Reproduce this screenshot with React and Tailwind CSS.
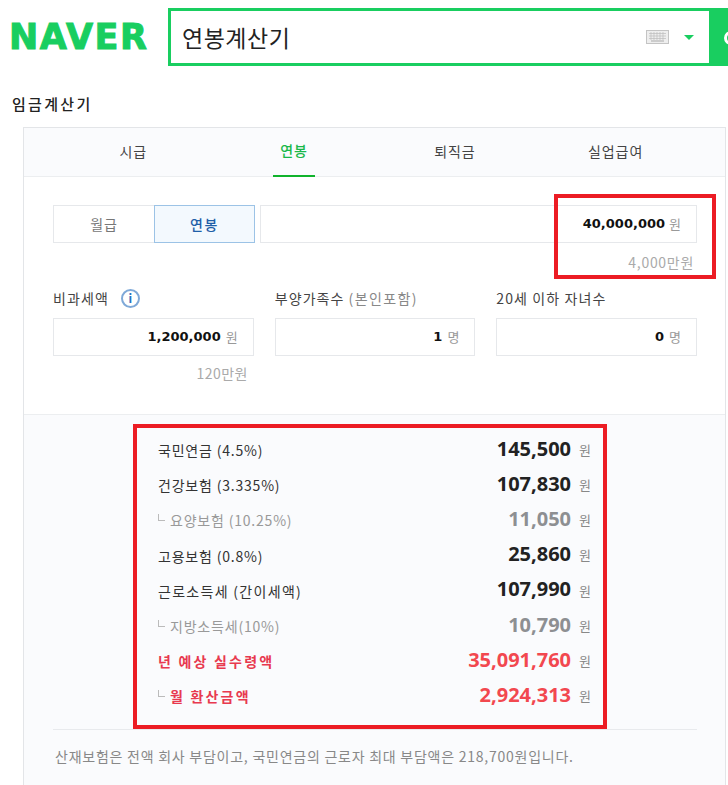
import React from "react";

const KR = "font-['Noto_Sans_CJK_KR','Noto_Sans',sans-serif]";

const tabs = ["시급", "연봉", "퇴직금", "실업급여"];

const rows = [
  { label: "국민연금 (4.5%)", value: "145,500" },
  { label: "건강보험 (3.335%)", value: "107,830" },
  { label: "요양보험 (10.25%)", value: "11,050", sub: true },
  { label: "고용보험 (0.8%)", value: "25,860" },
  { label: "근로소득세 (간이세액)", value: "107,990", wide: true },
  { label: "지방소득세(10%)", value: "10,790", sub: true },
  { label: "년 예상 실수령액", value: "35,091,760", red: true },
  { label: "월 환산금액", value: "2,924,313", red: true, sub: true },
];

function Corner() {
  return <span className="mr-[5px] mb-[7px] inline-block h-[7px] w-[7px] border-b border-l border-[#bbb]" />;
}

function KeyboardIcon() {
  return (
    <svg className="mr-[15px]" width="23" height="14" viewBox="0 0 23 14">
      <rect x="0.5" y="0.5" width="22" height="13" fill="#eee" stroke="#c4c4c4" />
      <path d="M3 3.5h17M3 6h17M3 8.5h17M5 2v8M8 2v8M11 2v8M14 2v8M17 2v8" stroke="#bbb" strokeWidth="0.7" fill="none" />
      <path d="M5 11h13" stroke="#aaa" />
    </svg>
  );
}

function NumberField({ label, hint, value, unit, info }) {
  return (
    <div className="min-w-0 flex-1">
      <div className="flex h-[20px] items-center text-[14px] tracking-[1.1px] whitespace-nowrap text-[#444]">
        {label}
        {hint && <span className="ml-1 tracking-[1.4px] text-[#888]">{hint}</span>}
        {info && (
          <span className="ml-[12px] flex h-[19px] w-[19px] items-center justify-center rounded-full border-2 border-[#7fa9d8] text-[12px] font-bold tracking-normal text-[#2a6fc0]">
            i
          </span>
        )}
      </div>
      <div className="mt-[10px] flex h-[38px] items-center justify-end border border-[#e6e8eb] bg-white pr-[15px]">
        <b className="font-['DejaVu_Sans'] text-[13px] text-[#111]">{value}</b>
        <span className="ml-[5px] text-[13px] text-[#999]">{unit}</span>
      </div>
    </div>
  );
}

export default function App() {
  return (
    <div className={`relative h-[785px] w-[728px] overflow-hidden bg-white ${KR}`}>
      {/* search header */}
      <div className="flex h-[66px] items-end pl-[9px]">
        <div className="flex h-[58px] w-[159px] items-center font-['DejaVu_Sans'] text-[35px] leading-none font-bold tracking-[1.5px] text-[#19ce60] [-webkit-text-stroke:1px_#19ce60]">
          NAVER
        </div>
        <div className="flex h-[58px] flex-1 items-center border-[3px] border-r-0 border-[#19ce60] pl-[11px]">
          <span className="flex-1 text-[23px] tracking-[0.5px] text-[#222]">연봉계산기</span>
          <KeyboardIcon />
          <span className="mr-[15px] h-0 w-0 border-x-[5px] border-t-[5px] border-x-transparent border-t-[#19ce60]" />
          <div className="relative h-full w-[19px] bg-[#19ce60]">
            <span className="absolute top-[20px] left-[15px] h-[14px] w-[14px] rounded-full border-[3px] border-white" />
          </div>
        </div>
      </div>

      <h1 className="mt-[27px] ml-[12px] h-[22px] text-[15px] leading-[22px] font-medium tracking-[2.3px] text-[#222]">임금계산기</h1>

      {/* calculator card */}
      <div className="mt-[12px] ml-[23px] w-[703px] border border-[#e3e5e8]">
        <div className="flex h-[49px] justify-center border-b border-[#eceef0] bg-[#fafbfd] px-[29px]">
          {tabs.map((t, i) => (
            <div key={t} className="flex w-[161px] justify-center">
              <div className={`flex h-[49px] items-center px-[7px] pb-[2px] text-[14px] tracking-[0.9px] ${i === 1 ? "border-b-[2px] border-[#10b32c] font-medium text-[#19b84a]" : "text-[#444]"}`}>
                {t}
              </div>
            </div>
          ))}
        </div>

        <div className="h-[238px] border-b border-[#eceef0] bg-white pt-[28px] pr-[28px] pl-[29px]">
          <div className="flex h-[38px]">
            <div className="flex w-[101px] items-center justify-center border border-r-0 border-[#e6e8eb] text-[14px] tracking-[0.9px] text-[#777]">월급</div>
            <div className="flex w-[101px] items-center justify-center border border-[#9cc3e6] bg-[#f3f9fe] text-[14px] font-medium tracking-[1.5px] text-[#1f5fa8]">연봉</div>
            <div className="ml-[5px] flex flex-1 items-center justify-end border border-[#e6e8eb] pr-[15px]">
              <b className="font-['DejaVu_Sans'] text-[13px] text-[#111]">40,000,000</b>
              <span className="ml-[4px] text-[13px] text-[#999]">원</span>
            </div>
          </div>
          <div className="mt-[9px] pr-[3px] text-right text-[14px] leading-[20px] tracking-[0.7px] text-[#aaa]">4,000만원</div>

          <div className="mt-[16px] flex gap-[21px]">
            <NumberField label="비과세액" value="1,200,000" unit="원" info />
            <NumberField label="부양가족수" hint="(본인포함)" value="1" unit="명" />
            <NumberField label="20세 이하 자녀수" value="0" unit="명" />
          </div>
          <div className="mt-[7px] w-[195px] text-right text-[14px] leading-[20px] tracking-[0.5px] text-[#aaa]">120만원</div>
        </div>

        {/* result */}
        <div className="h-[400px] bg-[#fafbfd] pt-[9px] pr-[28px] pl-[29px]">
          <div className="mr-[90px] ml-[80px] h-[305px] border-[4px] border-[#ec1c24] pt-[4px] pr-[12px] pl-[21px]">
            {rows.map((r) => (
              <div key={r.label} className="flex h-[35.2px] items-center justify-between">
                <span className={`mt-[2px] flex items-center text-[14px] whitespace-pre ${r.wide ? "tracking-[1.3px]" : "tracking-[0.8px]"} ${r.red ? "font-bold tracking-[2.2px] text-[#e8394f]" : r.sub ? "text-[#999]" : "text-[#333]"}`}>
                  {r.sub && <Corner />}
                  {r.label}
                </span>
                <span className="mb-[2px] flex items-center">
                  <b className={`font-['Open_Sans'] text-[20px] leading-none ${r.red ? "text-[#f2484f]" : r.sub ? "text-[#8d8f92]" : "text-[#222]"}`}>{r.value}</b>
                  <span className="mt-[2px] ml-[8px] text-[13px] text-[#888]">원</span>
                </span>
              </div>
            ))}
          </div>
          <div className="border-t border-[#e8eaed] pt-[16px] pl-[2px] text-[14px] leading-[20px] tracking-[0.75px] whitespace-nowrap text-[#888]">
            산재보험은 전액 회사 부담이고, 국민연금의 근로자 최대 부담액은 218,700원입니다.
          </div>
        </div>
      </div>

      {/* red highlight around the annual salary */}
      <div className="absolute top-[194px] left-[554px] h-[85px] w-[162px] border-[4px] border-[#ec1c24]" />
    </div>
  );
}
